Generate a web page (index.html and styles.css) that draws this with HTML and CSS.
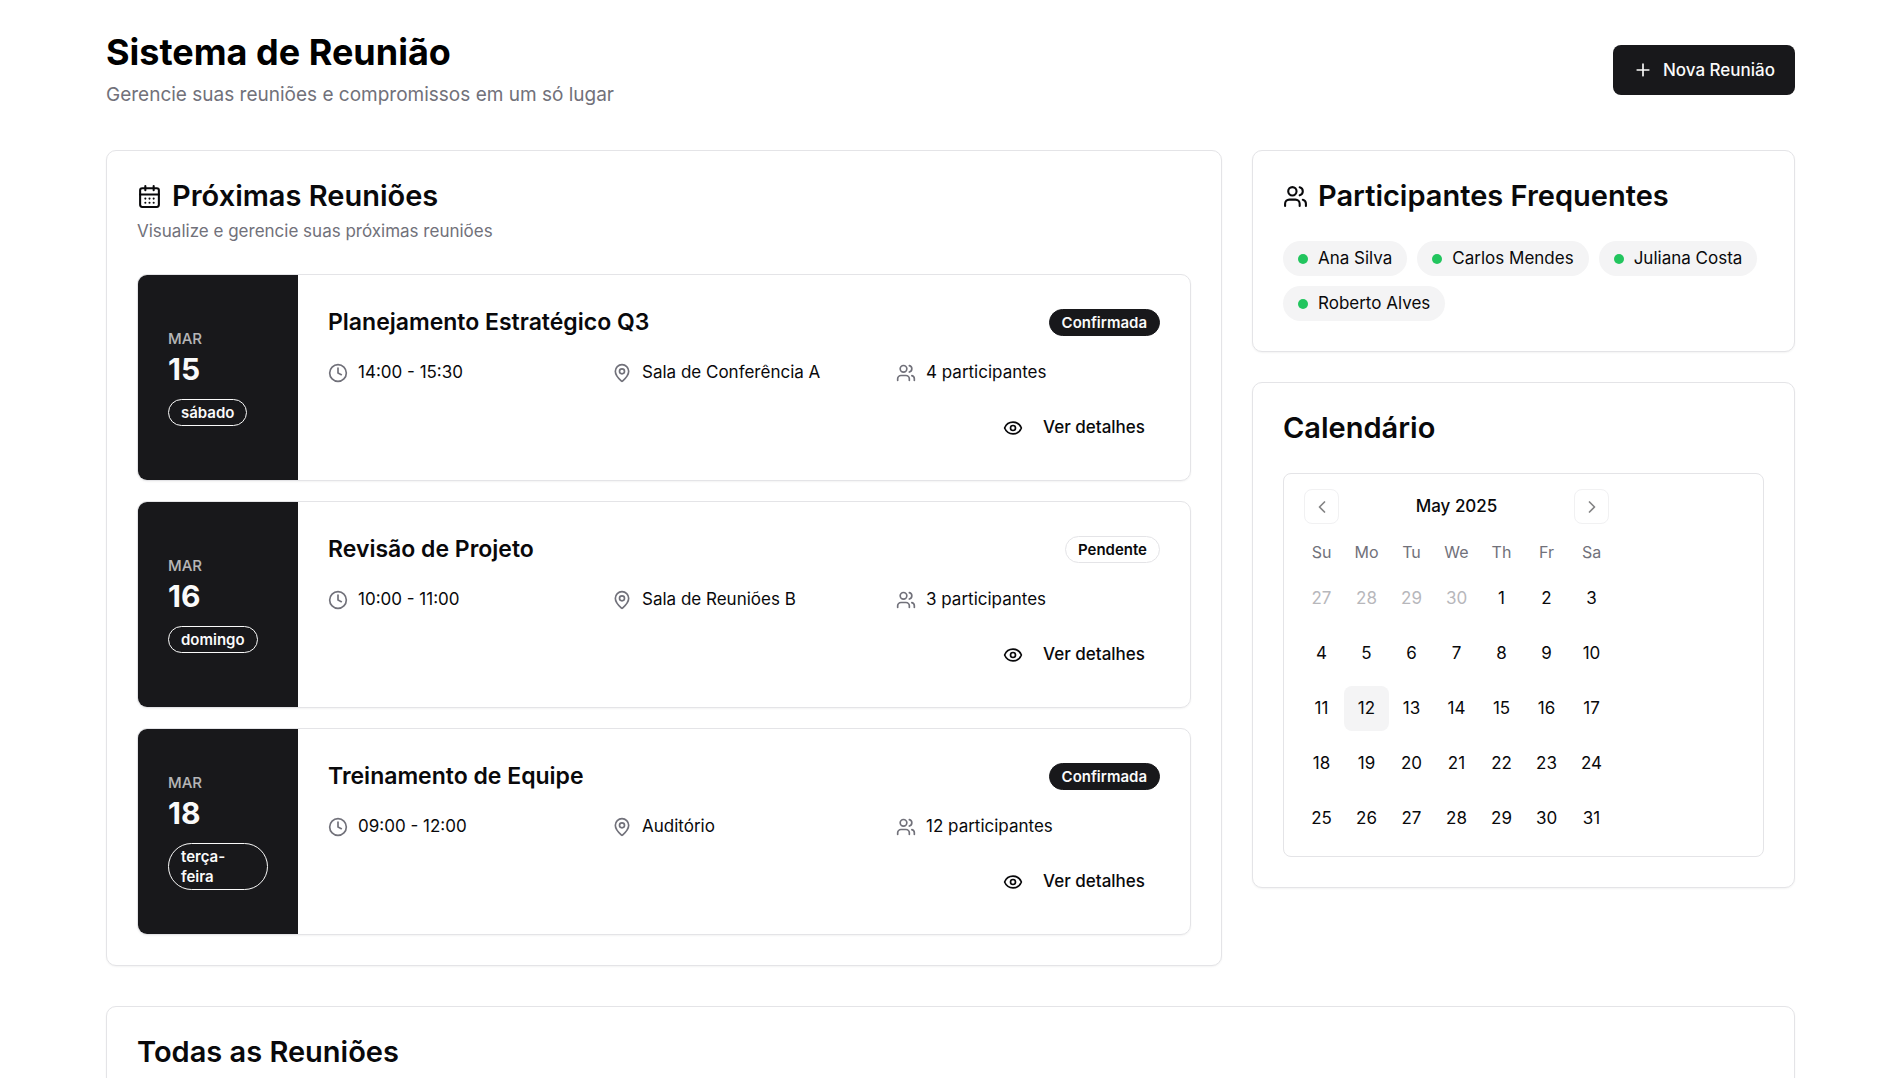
FILE: index.html
```html
<!DOCTYPE html>
<html lang="pt-BR">
<head>
<meta charset="utf-8">
<meta name="viewport" content="width=device-width, initial-scale=1">
<title>Sistema de Reunião</title>
<link rel="stylesheet" href="styles.css">
</head>
<body>
<svg class="sprite" aria-hidden="true">
  <symbol id="i-calendar" viewBox="0 0 24 24"><path d="M8 2v4M16 2v4M3 10h18"/><rect width="18" height="18" x="3" y="4" rx="2"/><path d="M8 14h.01M12 14h.01M16 14h.01M8 18h.01M12 18h.01M16 18h.01"/></symbol>
  <symbol id="i-users" viewBox="0 0 24 24"><path d="M16 21v-2a4 4 0 0 0-4-4H6a4 4 0 0 0-4 4v2"/><circle cx="9" cy="7" r="4"/><path d="M22 21v-2a4 4 0 0 0-3-3.87M16 3.13a4 4 0 0 1 0 7.75"/></symbol>
  <symbol id="i-clock" viewBox="0 0 24 24"><circle cx="12" cy="12" r="10"/><path d="M12 6v6l4 2"/></symbol>
  <symbol id="i-pin" viewBox="0 0 24 24"><path d="M20 10c0 4.993-5.539 10.193-7.399 11.799a1 1 0 0 1-1.202 0C9.539 20.193 4 14.993 4 10a8 8 0 0 1 16 0"/><circle cx="12" cy="10" r="3"/></symbol>
  <symbol id="i-eye" viewBox="0 0 24 24"><path d="M2.062 12.348a1 1 0 0 1 0-.696 10.75 10.75 0 0 1 19.876 0 1 1 0 0 1 0 .696 10.75 10.75 0 0 1-19.876 0"/><circle cx="12" cy="12" r="3"/></symbol>
  <symbol id="i-plus" viewBox="0 0 24 24"><path d="M5 12h14M12 5v14"/></symbol>
  <symbol id="i-left" viewBox="0 0 24 24"><path d="m15 18-6-6 6-6"/></symbol>
  <symbol id="i-right" viewBox="0 0 24 24"><path d="m9 18 6-6-6-6"/></symbol>
</svg>
<div class="page">
  <header class="page-header">
    <div>
      <h1 class="page-title">Sistema de Reunião</h1>
      <p class="page-subtitle">Gerencie suas reuniões e compromissos em um só lugar</p>
    </div>
    <button type="button" class="btn-primary"><svg class="icon"><use href="#i-plus"/></svg>Nova Reunião</button>
  </header>

  <main>
    <div class="columns">
      <section class="card">
        <h2 class="card-title"><svg class="icon icon-lg"><use href="#i-calendar"/></svg>Próximas Reuniões</h2>
        <p class="card-description">Visualize e gerencie suas próximas reuniões</p>
        <div class="meetings">
          <article class="meeting">
            <div class="meeting-date"><span class="month">MAR</span><span class="day-number">15</span><span class="badge badge-inverse">sábado</span></div>
            <div class="meeting-body">
              <div class="meeting-head"><h3 class="meeting-title">Planejamento Estratégico Q3</h3><span class="badge badge-solid">Confirmada</span></div>
              <div class="meeting-info">
                <span class="info"><svg class="icon"><use href="#i-clock"/></svg>14:00 - 15:30</span>
                <span class="info"><svg class="icon"><use href="#i-pin"/></svg>Sala de Conferência A</span>
                <span class="info"><svg class="icon"><use href="#i-users"/></svg>4 participantes</span>
              </div>
              <button type="button" class="btn-ghost"><svg class="icon"><use href="#i-eye"/></svg>Ver detalhes</button>
            </div>
          </article>
          <article class="meeting">
            <div class="meeting-date"><span class="month">MAR</span><span class="day-number">16</span><span class="badge badge-inverse">domingo</span></div>
            <div class="meeting-body">
              <div class="meeting-head"><h3 class="meeting-title">Revisão de Projeto</h3><span class="badge">Pendente</span></div>
              <div class="meeting-info">
                <span class="info"><svg class="icon"><use href="#i-clock"/></svg>10:00 - 11:00</span>
                <span class="info"><svg class="icon"><use href="#i-pin"/></svg>Sala de Reuniões B</span>
                <span class="info"><svg class="icon"><use href="#i-users"/></svg>3 participantes</span>
              </div>
              <button type="button" class="btn-ghost"><svg class="icon"><use href="#i-eye"/></svg>Ver detalhes</button>
            </div>
          </article>
          <article class="meeting">
            <div class="meeting-date"><span class="month">MAR</span><span class="day-number">18</span><span class="badge badge-inverse">terça-feira</span></div>
            <div class="meeting-body">
              <div class="meeting-head"><h3 class="meeting-title">Treinamento de Equipe</h3><span class="badge badge-solid">Confirmada</span></div>
              <div class="meeting-info">
                <span class="info"><svg class="icon"><use href="#i-clock"/></svg>09:00 - 12:00</span>
                <span class="info"><svg class="icon"><use href="#i-pin"/></svg>Auditório</span>
                <span class="info"><svg class="icon"><use href="#i-users"/></svg>12 participantes</span>
              </div>
              <button type="button" class="btn-ghost"><svg class="icon"><use href="#i-eye"/></svg>Ver detalhes</button>
            </div>
          </article>
        </div>
      </section>

      <aside class="sidebar">
        <section class="card">
          <h2 class="card-title"><svg class="icon icon-lg"><use href="#i-users"/></svg>Participantes Frequentes</h2>
          <ul class="people">
            <li class="person">Ana Silva</li>
            <li class="person">Carlos Mendes</li>
            <li class="person">Juliana Costa</li>
            <li class="person">Roberto Alves</li>
          </ul>
        </section>
        <section class="card">
          <h2 class="card-title">Calendário</h2>
          <div class="calendar">
            <div class="calendar-nav">
              <button type="button" class="nav-btn" aria-label="Mês anterior"><svg class="icon"><use href="#i-left"/></svg></button>
              <span class="calendar-month">May 2025</span>
              <button type="button" class="nav-btn" aria-label="Próximo mês"><svg class="icon"><use href="#i-right"/></svg></button>
            </div>
            <table class="calendar-grid">
              <thead><tr><th>Su</th><th>Mo</th><th>Tu</th><th>We</th><th>Th</th><th>Fr</th><th>Sa</th></tr></thead>
              <tbody>
                <tr><td><button type="button" class="day outside">27</button></td><td><button type="button" class="day outside">28</button></td><td><button type="button" class="day outside">29</button></td><td><button type="button" class="day outside">30</button></td><td><button type="button" class="day">1</button></td><td><button type="button" class="day">2</button></td><td><button type="button" class="day">3</button></td></tr>
                <tr><td><button type="button" class="day">4</button></td><td><button type="button" class="day">5</button></td><td><button type="button" class="day">6</button></td><td><button type="button" class="day">7</button></td><td><button type="button" class="day">8</button></td><td><button type="button" class="day">9</button></td><td><button type="button" class="day">10</button></td></tr>
                <tr><td><button type="button" class="day">11</button></td><td><button type="button" class="day today">12</button></td><td><button type="button" class="day">13</button></td><td><button type="button" class="day">14</button></td><td><button type="button" class="day">15</button></td><td><button type="button" class="day">16</button></td><td><button type="button" class="day">17</button></td></tr>
                <tr><td><button type="button" class="day">18</button></td><td><button type="button" class="day">19</button></td><td><button type="button" class="day">20</button></td><td><button type="button" class="day">21</button></td><td><button type="button" class="day">22</button></td><td><button type="button" class="day">23</button></td><td><button type="button" class="day">24</button></td></tr>
                <tr><td><button type="button" class="day">25</button></td><td><button type="button" class="day">26</button></td><td><button type="button" class="day">27</button></td><td><button type="button" class="day">28</button></td><td><button type="button" class="day">29</button></td><td><button type="button" class="day">30</button></td><td><button type="button" class="day">31</button></td></tr>
              </tbody>
            </table>
          </div>
        </section>
      </aside>
    </div>

    <section class="card all-meetings">
      <h2 class="card-title">Todas as Reuniões</h2>
    </section>
  </main>
</div>
</body>
</html>
```
FILE: styles.css
```css
:root {
  --foreground: #09090b;
  --primary: #18181b;
  --on-primary: #fafafa;
  --muted: #71717a;
  --border: #e4e4e7;
  --surface: #f4f4f5;
}

* { box-sizing: border-box; }

body {
  margin: 0;
  background: #fff;
  color: var(--foreground);
  font: 400 17px/25px Inter, "Liberation Sans", sans-serif;
}

h1, h2, h3, p, ul { margin: 0; padding: 0; }

button {
  padding: 0;
  border: 0;
  background: none;
  color: inherit;
  font: inherit;
  cursor: pointer;
}

.sprite { display: none; }

.icon {
  flex: none;
  width: 20px;
  height: 20px;
  fill: none;
  stroke: currentColor;
  stroke-width: 2;
  stroke-linecap: round;
  stroke-linejoin: round;
}

.icon-lg { width: 25px; height: 25px; }

.page { padding: 30px 102px 30px 106px; }

.page-header {
  display: flex;
  align-items: center;
  justify-content: space-between;
  gap: 20px;
  margin-bottom: 40px;
}

.page-title { color: #000; font-size: 36px; line-height: 45px; font-weight: 700; }

.page-subtitle {
  margin-top: 5px;
  color: var(--muted);
  font-size: 19px;
  line-height: 30px;
}

.btn-primary {
  display: flex;
  align-items: center;
  gap: 10px;
  height: 50px;
  padding: 0 20px;
  border-radius: 8px;
  background: var(--primary);
  color: var(--on-primary);
  font-weight: 500;
  white-space: nowrap;
}

.columns {
  display: grid;
  grid-template-columns: repeat(3, minmax(0, 1fr));
  gap: 30px;
  align-items: start;
}

.columns > .card { grid-column: span 2; }

.sidebar { display: grid; gap: 30px; }

.card {
  padding: 30px;
  border: 1px solid var(--border);
  border-radius: 10px;
  background: #fff;
  box-shadow: 0 1px 2px rgba(0, 0, 0, 0.05);
}

.card-title {
  display: flex;
  align-items: center;
  gap: 10px;
  font-size: 29px;
  line-height: 30px;
  font-weight: 600;
}

.card-description { margin-top: 8px; color: var(--muted); }

.meetings { display: grid; gap: 20px; margin-top: 30px; }

.meeting {
  display: flex;
  overflow: hidden;
  border: 1px solid var(--border);
  border-radius: 10px;
  box-shadow: 0 1px 2px rgba(0, 0, 0, 0.05);
}

.meeting-date {
  display: flex;
  flex: none;
  flex-direction: column;
  align-items: flex-start;
  justify-content: center;
  width: 160px;
  padding: 0 30px;
  background: var(--primary);
  color: var(--on-primary);
}

.month { font-size: 15px; line-height: 20px; font-weight: 500; opacity: 0.7; }

.day-number { margin-bottom: 10px; font-size: 30px; line-height: 40px; font-weight: 700; }

.badge {
  padding: 3px 12px 2px;
  border: 1px solid var(--border);
  border-radius: 24px;
  font-size: 15px;
  line-height: 20px;
  font-weight: 600;
}

.badge-solid { border-color: var(--primary); background: var(--primary); color: var(--on-primary); }

.badge-inverse { border-color: var(--on-primary); }

.meeting-body { flex: 1; min-width: 0; padding: 30px; }

.meeting-head { display: flex; align-items: center; justify-content: space-between; gap: 10px; }

.meeting-title { font-size: 23px; line-height: 35px; font-weight: 600; }

.meeting-info {
  display: grid;
  grid-template-columns: repeat(3, minmax(0, 1fr));
  gap: 20px;
  margin: 20px 0;
}

.info { display: flex; align-items: center; gap: 10px; }

.info .icon { color: var(--muted); }

.btn-ghost {
  display: flex;
  align-items: center;
  gap: 20px;
  height: 45px;
  margin-left: auto;
  padding: 0 15px;
  border-radius: 8px;
  font-weight: 500;
}

.people {
  display: flex;
  flex-wrap: wrap;
  gap: 10px;
  margin-top: 30px;
  list-style: none;
}

.person {
  display: flex;
  align-items: center;
  gap: 10px;
  padding: 5px 15px;
  border-radius: 18px;
  background: var(--surface);
}

.person::before {
  content: "";
  width: 10px;
  height: 10px;
  border-radius: 50%;
  background: #22c55e;
}

.calendar {
  margin-top: 30px;
  padding: 15px;
  border: 1px solid var(--border);
  border-radius: 8px;
}

.calendar-nav {
  display: flex;
  align-items: center;
  justify-content: space-between;
  width: 315px;
  margin-bottom: 15px;
  padding: 0 5px;
}

.calendar-month { font-weight: 500; }

.nav-btn {
  display: grid;
  place-items: center;
  width: 35px;
  height: 35px;
  border: 1px solid var(--border);
  border-radius: 8px;
  opacity: 0.5;
}

.calendar-grid { width: 315px; border-collapse: collapse; table-layout: fixed; }

.calendar-grid th {
  height: 27px;
  padding: 0;
  color: var(--muted);
  font-size: 16px;
  font-weight: 400;
}

.calendar-grid td { padding: 10px 0 0; }

.day { display: block; width: 45px; height: 45px; border-radius: 8px; }

.outside { color: var(--muted); opacity: 0.5; }

.today { background: var(--surface); }

.all-meetings { margin-top: 40px; }

@media (max-width: 1280px) {
  .page { padding: 30px; }
  .columns { grid-template-columns: minmax(0, 1fr); }
  .columns > .card { grid-column: auto; }
}
```
